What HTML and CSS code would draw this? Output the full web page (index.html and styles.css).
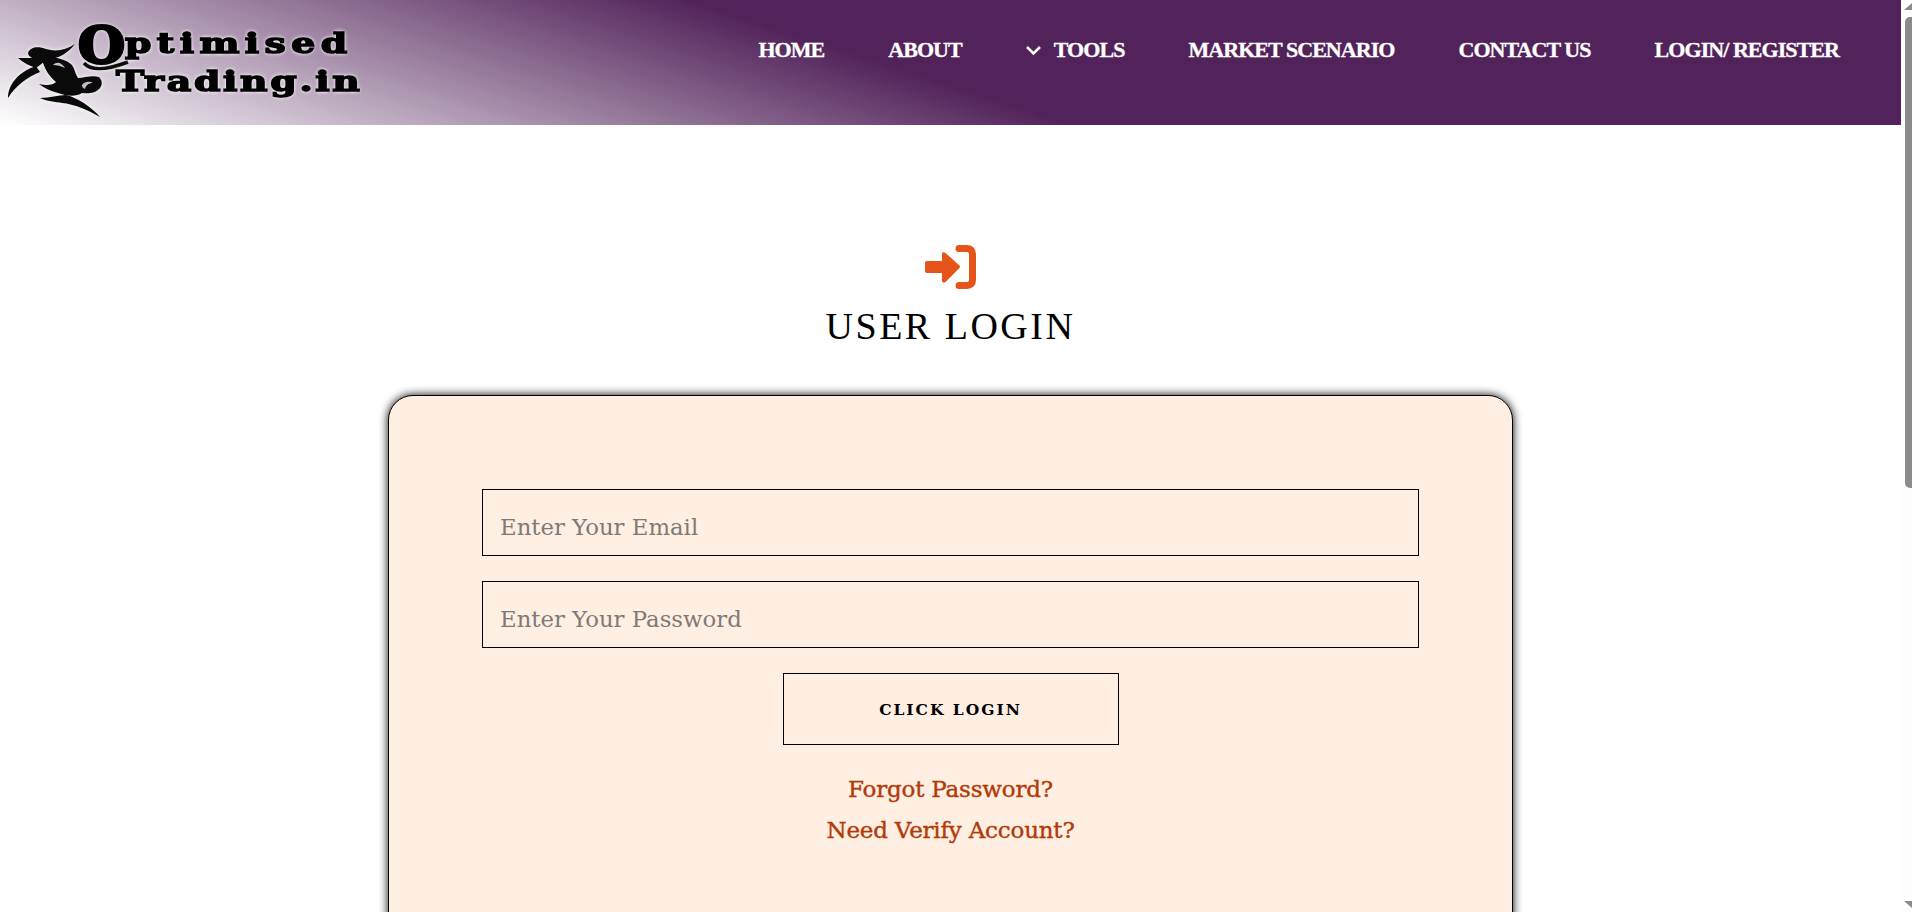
FILE: index.html
```html
<!DOCTYPE html>
<html>
<head>
    <title>User Login - Optimised Trading</title>
    <meta charset="utf-8">
    <meta name="viewport" content="width=device-width, initial-scale=1.0">
    <link rel="stylesheet" href="styles.css">
</head>
<body>

    <header class="site-header">
        <a class="logo" href="#">
            <svg class="logo-bull" viewBox="0 0 130 90" aria-hidden="true">
                <!-- left swoosh -->
                <path d="M8 63 C8 50 18 37 36 31 L40 37 C28 42 16 50 8 63 Z" />
                <!-- top horn and ear -->
                <path d="M75 9 C66 15 56 17 46 14 C38 11 30 12 28 18 C28 20 30 22 32 23 C27 23 22 23 18 23 C24 28 30 31 36 33 L48 24 C58 24 68 18 75 9 Z" />
                <!-- head -->
                <path d="M42 24 C52 20 66 24 72 30 C75 34 75 39 78 43 C84 43 92 40 99 42 C102 45 103 49 100 53 C96 58 88 59 82 58 C76 62 66 61 58 58 C50 56 44 53 39 49 C47 51 53 50 56 47 C50 42 44 34 42 24 Z" />
                <!-- lower swoosh -->
                <path d="M40 63 C50 63 58 60 66 60 C76 62 92 72 100 82 C88 75 74 69 62 68 C56 67 46 66 40 63 Z" />
                <path class="logo-bull-cut" d="M53 30 C57 26 62 28 65 33 C61 31 57 30 53 30 Z M82 50 C85 46 90 46 93 48 C89 48 86 50 85 54 C83 53 82 52 82 50 Z" />
                <!-- tail of the O -->
                <path class="logo-swash" d="M84 28 C90 35 104 36 128 27" />
            </svg>
            <span class="logo-big">O</span>
            <span class="logo-word logo-top">ptimised</span>
            <span class="logo-word logo-bottom">Trading.in</span>
        </a>
        <nav class="main-nav">
            <a href="#">HOME</a>
            <a href="#">ABOUT</a>
            <a href="#" class="has-sub">
                <svg class="chevron" viewBox="0 0 15 9" aria-hidden="true"><path d="M1 1 L7.500 7.500 L14 1" /></svg>
                TOOLS
            </a>
            <a href="#">MARKET SCENARIO</a>
            <a href="#">CONTACT US</a>
            <a href="#">LOGIN/ REGISTER</a>
        </nav>
    </header>

    <main class="login-page">
        <svg class="login-icon" viewBox="0 0 51 44" aria-hidden="true">
            <path class="login-arrow" d="M2 16 H17 V9 C17 7 19 6.500 20.500 8 L34 20 C35.200 21 35.200 22.500 34 23.500 L20.500 37 C19 38.500 17 37.500 17 35.500 V28 H2 C0.800 28 0 27.200 0 26 V18 C0 16.800 0.800 16 2 16 Z" />
            <path class="login-bracket" d="M34 3.500 H42 C45.500 3.500 47.500 5.500 47.500 9 V35 C47.500 38.500 45.500 40.500 42 40.500 H34" />
        </svg>
        <h1 class="login-title">USER LOGIN</h1>

        <section class="login-card">
            <form class="login-form">
                <input type="email" placeholder="Enter Your Email">
                <input type="password" placeholder="Enter Your Password">
                <button type="button">CLICK LOGIN</button>
                <div class="login-links">
                    <a href="#">Forgot Password?</a>
                    <a href="#">Need Verify Account?</a>
                </div>
            </form>
        </section>
    </main>

    <aside class="scrollbar" aria-hidden="true">
        <div class="scrollbar-up"></div>
        <div class="scrollbar-thumb"></div>
        <div class="scrollbar-down"></div>
    </aside>

</body>
</html>
```

FILE: styles.css
```css
body {
    margin: 0 11px 0 0;
    background-color: white;
    min-height: 1703px;
}

a {
    text-decoration: none;
}

/* scrollbar */

.scrollbar {
    position: fixed;
    top: 0;
    right: 0;
    bottom: 0;
    width: 11px;
    display: flex;
    flex-direction: column;
    align-items: flex-end;
    background-color: #fdfdfd;
}

.scrollbar-up,
.scrollbar-down {
    width: 8px;
    height: 7px;
    background-color: #8b8b8b;
}

.scrollbar-up {
    margin-top: 3px;
    clip-path: polygon(100% 0, 100% 100%, 0 100%);
}

.scrollbar-thumb {
    width: 7px;
    height: 471px;
    margin-top: 7px;
    background-color: #8b8b8b;
    border-radius: 5px 0 0 5px;
}

.scrollbar-down {
    margin-top: auto;
    margin-bottom: 4px;
    clip-path: polygon(0 0, 100% 0, 100% 100%);
}

/* header */

.site-header {
    display: flex;
    justify-content: space-between;
    align-items: center;
    height: 125px;
    padding-right: 62px;
    background: linear-gradient(18deg, #ffffff 0%, #52235a 47%);
}

.logo {
    position: relative;
    display: block;
    width: 370px;
    height: 125px;
    color: black;
    font-family: "DejaVu Serif", serif;
    font-weight: bold;
}

.logo-bull {
    position: absolute;
    left: 0;
    top: 35px;
    width: 130px;
    height: 90px;
    fill: #0a0a0a;
    filter: drop-shadow(0 0 2px white);
}

.logo-bull-cut {
    fill: #c9b9cc;
}

.logo-swash {
    fill: none;
    stroke: #0a0a0a;
    stroke-width: 3.500;
}

.logo-big,
.logo-word {
    position: absolute;
    white-space: nowrap;
    transform-origin: left top;
    text-shadow: 0 0 4px white, 0 0 4px white;
}

.logo-big {
    left: 78px;
    top: 17px;
    font-size: 50px;
    line-height: 58px;
    -webkit-text-stroke: 3px black;
    transform: scaleX(1.080);
}

.logo-word {
    -webkit-text-stroke: 1.500px black;
    font-size: 28px;
    line-height: 32px;
    transform: scaleX(1.350);
}

.logo-top {
    left: 125px;
    top: 28px;
    letter-spacing: 4px;
}

.logo-bottom {
    left: 116px;
    top: 66px;
    letter-spacing: 2px;
}

.main-nav {
    display: flex;
    align-items: center;
    gap: 64px;
    margin-top: -25px;
}

.main-nav a {
    color: white;
    font-family: "Liberation Serif", serif;
    font-weight: bold;
    font-size: 22px;
    letter-spacing: -0.950px;
    white-space: nowrap;
    -webkit-text-stroke: 0.300px white;
}

.has-sub {
    display: flex;
    align-items: center;
    gap: 13px;
}

.chevron {
    width: 15px;
    height: 9px;
    fill: none;
    stroke: white;
    stroke-width: 2.500;
}

/* login */

.login-page {
    display: flex;
    flex-direction: column;
    align-items: center;
    padding-top: 120px;
}

.login-icon {
    width: 51px;
    height: 44px;
    display: block;
}

.login-arrow {
    fill: #e5541b;
}

.login-bracket {
    fill: none;
    stroke: #e5541b;
    stroke-width: 7;
    stroke-linecap: round;
}

.login-title {
    margin: 11px 0 43px;
    color: black;
    font-family: "Liberation Serif", serif;
    font-weight: normal;
    font-size: 38px;
    line-height: 52px;
    letter-spacing: 2.500px;
}

.login-card {
    box-sizing: border-box;
    width: 1125px;
    min-height: 800px;
    padding: 93px;
    background-color: #ffefe3;
    border: 1px solid black;
    border-radius: 25px;
    box-shadow: 0 0 10px black;
}

.login-form {
    display: flex;
    flex-direction: column;
    align-items: center;
}

.login-form input {
    box-sizing: border-box;
    width: 937px;
    height: 67px;
    margin-bottom: 25px;
    padding: 8px 17px 0;
    background-color: transparent;
    border: 1px solid black;
    border-radius: 0;
    font-family: "DejaVu Serif", serif;
    font-size: 22.800px;
}

.login-form input::placeholder {
    color: #7f7a75;
    opacity: 1;
}

.login-form button {
    box-sizing: border-box;
    width: 336px;
    height: 72px;
    background-color: transparent;
    border: 1px solid black;
    color: black;
    font-family: "DejaVu Serif", serif;
    font-weight: bold;
    font-size: 15.500px;
    letter-spacing: 2px;
}

.login-links {
    display: flex;
    flex-direction: column;
    align-items: center;
    margin-top: 24px;
}

.login-links a {
    color: #b23a06;
    font-family: "DejaVu Serif", serif;
    font-size: 23px;
    letter-spacing: -0.200px;
    line-height: 41px;
    -webkit-text-stroke: 0.400px #b23a06;
}
```
